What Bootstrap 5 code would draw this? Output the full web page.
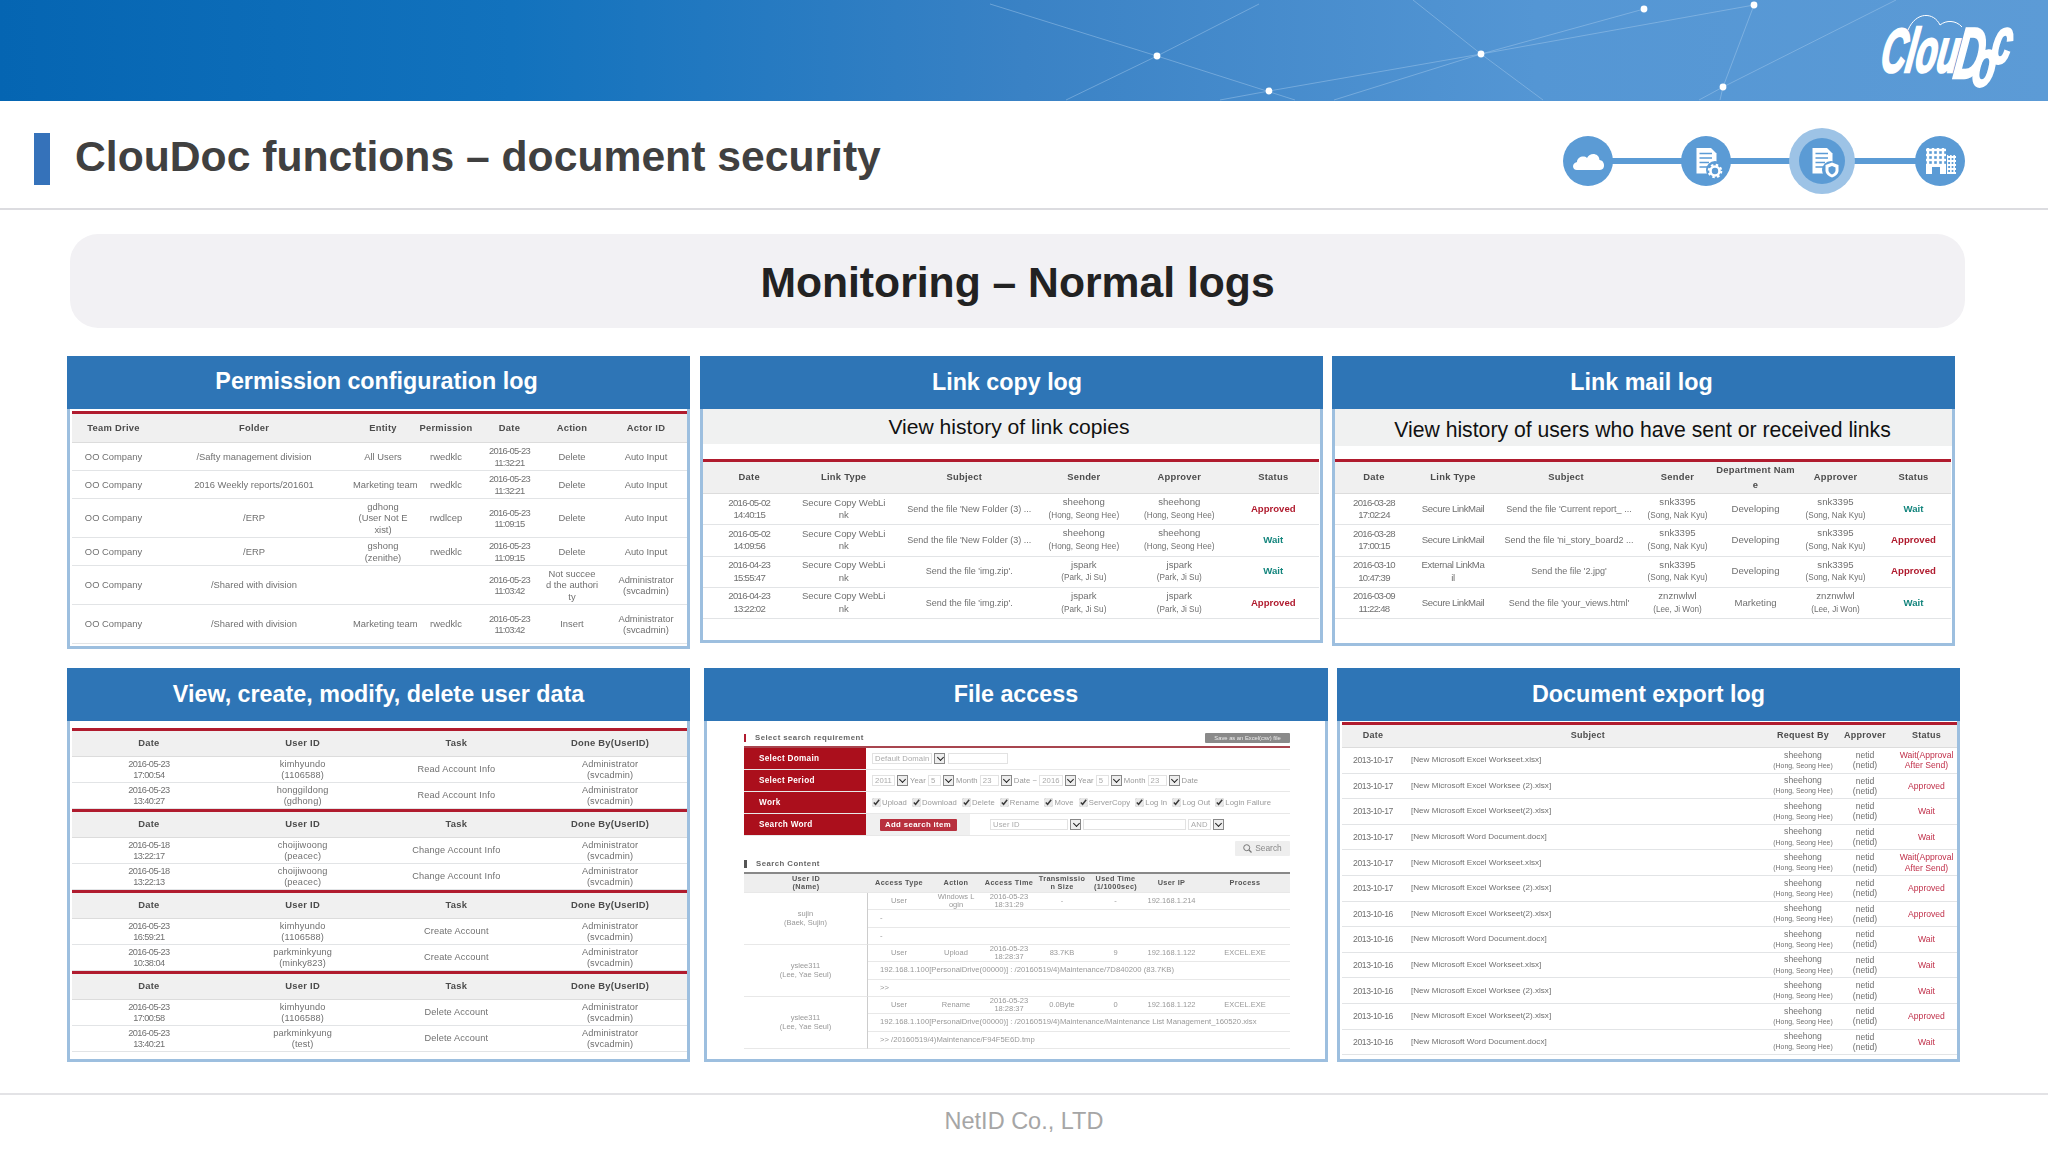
<!DOCTYPE html>
<html lang="en"><head><meta charset="utf-8"><title>ClouDoc functions</title>
<link href="https://cdn.jsdelivr.net/npm/bootstrap@5.3.0/dist/css/bootstrap.min.css" rel="stylesheet">
<style>
html,body{margin:0;background:#fff;font-family:"Liberation Sans",Arial,sans-serif;width:2048px;height:1152px;overflow:hidden}
.banner{height:101px;background:linear-gradient(90deg,#0565b2 0%,#1272bd 25%,#3a82c5 50%,#5496d4 75%,#5c9bd6 100%);padding-right:34px;padding-top:13px}
.net{position:absolute;left:0;top:0;width:2048px;height:101px}
.logo-c{position:relative;width:136px;height:76px}
.logo-c svg{overflow:visible}
.titlebar{height:109px;border-bottom:2px solid #dcdce0}
.hd-bar{width:16px;height:52px;background:#3572ba;margin-left:34px;margin-top:8px}
.hd-title{font-size:42.67px;font-weight:700;color:#404040;margin:0 0 0 25px;line-height:1;padding-top:4px}
.stepper{margin-right:75px;margin-top:12px}
.pill-t{height:94px;width:1895px;margin:24px 0 0 70px;background:#f2f1f4;border-radius:28px}
.pill-t h2{font-size:42.67px;font-weight:700;color:#222;margin:0;line-height:1;padding-top:2px}
.prow{padding-left:67px}
.prow-a{margin-top:28px;height:312px;gap:10px}
.prow-b{height:394px;gap:14px}
.prow-a .pnl:last-child{margin-left:-1px}
.prow-b .pnl:last-child{margin-left:-5px}
.pnl{width:623px;border:0;border-radius:0;background:#fff}
.pw2{width:624px}
.ph1{height:293px}.ph2{height:287px}.ph3{height:290px}.ph4{height:394px}
.pnl>.card-header{height:53px;background:#2e75b6;border:0;border-radius:0;color:#fff;font-weight:700;font-size:23.3px;text-align:center;padding:0;line-height:52px;flex:none}
.ph1>.card-header{line-height:50px;padding-right:4px}
.ph2>.card-header{padding-right:9px}
.ph3>.card-header{padding-right:4px}
.subt{background:#f0f1f1;color:#111;text-align:center;margin:0;height:35px;line-height:36px;font-size:21.1px;padding-right:5px}
.subt.s2{height:37px;line-height:42px;font-size:21.2px;padding-right:2px}
.pnl>.card-body{padding:0;border:solid #9dbfdf;border-width:0 3px 3px;min-height:0;flex:1 1 auto;overflow:hidden}
.table.logt{table-layout:fixed;border-collapse:separate;border-spacing:0;margin:0;border-top:3px solid #b01b2e;font-size:9.4px;color:#707070;--bs-table-bg:#fff;--bs-table-color:#707070;filter:blur(.3px)}
.table.logt>:not(caption)>*>*{padding:0;vertical-align:middle;text-align:center;border-bottom:1px solid #e2e4e6;color:#707070;white-space:nowrap;overflow:visible}
.table.logt>thead>tr>th{background:#f0f0f0;color:#4c4c4c;font-weight:700;letter-spacing:.25px;border-bottom:1px solid #dcdcdc}
.cap1{padding:2px 0 0 2px}
.cap0{padding:1px 0 0 2px}
.cap2{padding:15px 1px 0 0}
.s2+.cap2{padding-top:13px}
.t1 th{height:29px}.t1 td{height:28px;line-height:11.3px}.t1 tr.tall td{height:39px}
.table.t1>tbody>tr>td:nth-child(5){letter-spacing:-.7px}
.t1 col:nth-child(1){width:83px}.t1 col:nth-child(2){width:198px}.t1 col:nth-child(3){width:60px}.t1 col:nth-child(4){width:66px}.t1 col:nth-child(5){width:61px}.t1 col:nth-child(6){width:64px}.t1 col:nth-child(7){width:84px}
.t2 th{height:32px}.t2 td{height:31.3px;line-height:12.6px;font-size:9.6px}
.table.t2>tbody>tr>td:nth-child(1){letter-spacing:-.72px}
.table.t2>tbody>tr>td:nth-child(2){letter-spacing:-.1px}
.table.t2>tbody>tr>td:nth-child(3){font-size:9px;padding-left:10px}
.table.t3>tbody>tr>td:nth-child(2){letter-spacing:-.4px}
.table.t3>tbody>tr>td:nth-child(3){padding-left:6px}
.t2 small,.t3 small{font-size:8.2px}
.t2 col:nth-child(1){width:92px}.t2 col:nth-child(2){width:96px}.t2 col:nth-child(3){width:144px}.t2 col:nth-child(4){width:94px}.t2 col:nth-child(5){width:96px}.t2 col:nth-child(6){width:91px}
.t3 col:nth-child(1){width:78px}.t3 col:nth-child(2){width:80px}.t3 col:nth-child(3){width:146px}.t3 col:nth-child(4){width:77px}.t3 col:nth-child(5){width:79px}.t3 col:nth-child(6){width:81px}.t3 col:nth-child(7){width:75px}
.table.logt>*>*>.okst{color:#b01b2e;font-weight:700}
.table.logt>*>*>.wtst{color:#14857d;font-weight:700}
.t4wrap{padding:7px 0 0 2px}
.t4 th{height:26px}.t4 td{height:26px;line-height:10.5px;letter-spacing:.15px;font-size:9.2px}
.table.t4>tbody>tr>td:nth-child(1){letter-spacing:-.55px}
.t6 th{height:23px;font-size:9px}.t6 td{height:25.6px;line-height:10.2px;font-size:8.6px}
.table.t6>tbody>tr>td:nth-child(1){letter-spacing:-.4px}
.t6 small{font-size:6.9px}
.t6 col:nth-child(1){width:62px}.t6 col:nth-child(2){width:368px}.t6 col:nth-child(3){width:62px}.t6 col:nth-child(4){width:62px}.t6 col:nth-child(5){width:61px}
.table.logt>tbody>tr>.lft{text-align:left;padding-left:7px;font-size:8.1px}
.table.logt>*>*>.rdst{color:#c0304a}
.fa-wrap{padding:12px 35px 0 37px;filter:blur(.3px)}
.fa-h{height:10px;font-size:7.8px;font-weight:700;color:#666;letter-spacing:.45px;line-height:10px}
.fa-h i{display:block;width:2px;height:8px;background:#b01b2e;margin-right:9px}
.fa-h.dk i{background:#555;width:3px}
.fa-save{background:#8a8a8a;color:#eee;font-size:5.8px;width:85px;height:10px;line-height:10px;text-align:center;border-radius:1px;font-weight:400;letter-spacing:0}
.fa-form{margin-top:3px;border-top:2px solid #a8454f}
.fa-r{height:22px;border-bottom:1px solid #e8e8e8;font-size:7.7px;color:#999;letter-spacing:.1px;white-space:nowrap}
.fa-l{width:122px;height:100%;background:#ab0f1c;color:#fff;font-weight:700;font-size:8.2px;padding-left:15px;line-height:21px;flex:none;letter-spacing:.3px}
.fa-v{padding-left:6px;gap:2px;flex:1}
.sbox{display:inline-block;height:11px;line-height:10px;border:1px solid #e2e2e2;padding:0 2px;color:#aaa;flex:none}
.sbox.wa{width:19px}.sbox.wb{width:13px}.sbox.wc{width:60px;margin-left:1px}
.sbox.wu{width:78px;margin-left:14px}.sbox.wt{width:103px}
.sarr{display:inline-block;width:11px;height:11px;border:1px solid #888;background:#eee;position:relative;flex:none}
.sarr::after{content:"";position:absolute;left:2.5px;top:1px;width:5px;height:5px;border:solid #222;border-width:0 1.5px 1.5px 0;transform:rotate(45deg)}
.fa-v.fa-c{gap:5px}
.fa-c label{display:inline-flex;align-items:center;gap:1px}
.fa-c input{width:9px;height:9px;margin:0;accent-color:#e8e8e8}
.fa-add{width:104px;height:100%;background:#f0f0f0;flex:none;display:flex;align-items:center;justify-content:center}
.btn.fa-red{background:#b8303e;color:#fff;border:0;border-radius:1px;font-size:7.8px;font-weight:700;width:77px;height:12px;padding:0;line-height:12px;letter-spacing:.35px}
.fa-btm{height:16px;margin-top:5px}
.btn.fa-s{background:#eee;border:0;border-radius:1px;width:55px;height:15px;padding:0;font-size:8.4px;color:#888;line-height:15px;display:flex;align-items:center;justify-content:center;gap:3px}
.fa-sc{margin-top:2px}
.table.fat{table-layout:fixed;margin:3px 0 0;border-collapse:separate;border-spacing:0;border-top:2px solid #888;font-size:7.5px;color:#999;--bs-table-bg:#fff}
.table.fat>:not(caption)>*>*{padding:0;vertical-align:middle;text-align:center;border-bottom:1px solid #e8e8e8;color:#999;line-height:8.2px;height:17.3px;white-space:nowrap}
.table.fat>thead>tr>th{background:#eee;color:#555;font-weight:700;height:19px;letter-spacing:.35px;font-size:7.3px}
.table.fat>tbody>tr>td.gl{border-right:1px solid #ccc}
.table.fat>tbody>tr>td.lf{text-align:left;padding-left:12px;font-size:7.7px}
.fat col:nth-child(1){width:124px}.fat col:nth-child(2){width:62px}.fat col:nth-child(3){width:52px}.fat col:nth-child(4){width:54px}.fat col:nth-child(5){width:52px}.fat col:nth-child(6){width:55px}.fat col:nth-child(7){width:57px}.fat col:nth-child(8){width:90px}
.foot-t{margin-top:31px;border-top:2px solid #e3e3e6;height:58px;color:#a6a6a6;font-size:23.5px;text-align:center;line-height:53px}
</style></head><body>
<header class="banner position-relative d-flex justify-content-end">
<svg class="net" viewBox="0 0 2048 101" aria-hidden="true">
<g stroke="#a9cdee" stroke-width="1" stroke-opacity=".45" fill="none">
<path d="M990 4 1157 56 1295 100M1259 4 1157 56 1066 100"/>
<path d="M1220 100 1269 91 1481 54 1334 100M1481 54 1644 9M1481 54 1754 5M1413 0 1481 54 1543 100M1754 5 1723 87 1720 100M1896 0 1723 87 1699 100"/>
</g>
<g fill="#fff"><circle cx="1157" cy="56" r="3.4"/><circle cx="1269" cy="91" r="3.4"/><circle cx="1481" cy="54" r="3.4"/><circle cx="1644" cy="9" r="3.4"/><circle cx="1754" cy="5" r="3.4"/><circle cx="1723" cy="87" r="3.4"/></g>
</svg>
<div class="logo-c">
<svg width="136" height="76" viewBox="0 0 136 76">
<path d="M30 17C38 -2 56 -1 62 12C68 7 78 7 84 14" fill="none" stroke="#fff" stroke-width="1"/>
<text transform="translate(1 59) skewX(-9) scale(1 1.786)" font-family="'Liberation Sans',sans-serif" font-weight="700" font-style="italic" fill="#fff" stroke="#fff" stroke-width="1.4" font-size="34.7">Clou<tspan font-size="40.3" dy="3.4" dx="-2.8">D</tspan><tspan font-size="37" dy="4.500" dx="-10">o</tspan><tspan font-size="36" dy="-12.900" dx="-7">c</tspan></text>
</svg>
</div>
</header>
<div class="titlebar d-flex align-items-center">
<div class="hd-bar"></div>
<h1 class="hd-title">ClouDoc functions – document security</h1>
<svg class="stepper ms-auto" width="420" height="72" viewBox="0 0 420 72" aria-hidden="true">
<defs>
<g id="docI"><path d="M-9.5 -13H5L10.5 -7.5V12.5H-9.5Z" fill="#fff"/><path d="M-6.5 -7.5H6M-6.5 -3H6M-6.5 1.5H3M-6.5 6H1" stroke="#5b9bd5" stroke-width="1.4"/><circle cx="9" cy="9" r="9" fill="#5b9bd5"/></g>
<pattern id="winA" width="5" height="5" patternUnits="userSpaceOnUse"><rect x="1.2" y="1.2" width="2.6" height="2.6" fill="#5b9bd5"/></pattern>
<pattern id="winB" width="3.4" height="4" patternUnits="userSpaceOnUse"><rect x=".8" y="1" width="1.8" height="2" fill="#5b9bd5"/></pattern>
</defs>
<rect x="35" y="33" width="352" height="6" fill="#5b9bd5"/>
<circle cx="35" cy="36" r="25" fill="#5b9bd5"/><circle cx="153" cy="36" r="25" fill="#5b9bd5"/><circle cx="269" cy="36" r="33" fill="#9dc3e6"/><circle cx="269" cy="36" r="23" fill="#5b9bd5"/><circle cx="387" cy="36" r="25" fill="#5b9bd5"/>
<path d="M24 45C19 45 18.500 38 24 37C24 32 31 30 34 33C37 27 46 28 46.500 35C52 35 53 45 47 45Z" fill="#fff"/>
<use href="#docI" x="153" y="36"/>
<g transform="translate(162 46)"><circle r="4.500" fill="none" stroke="#fff" stroke-width="2.600"/><circle r="6.300" fill="none" stroke="#fff" stroke-width="2" stroke-dasharray="2.500 2.450"/></g>
<use href="#docI" x="269" y="36"/>
<path d="M279 37.500 285.500 40V45.500C285.500 49 282 51.500 279 52.500C276 51.500 272.500 49 272.500 45.500V40Z" fill="#fff"/><path d="M279 41 282.500 42.500V45.500C282.500 47 281 48.500 279 49.500C277 48.500 275.500 47 275.500 45.500V42.500Z" fill="#5b9bd5"/>
<rect x="373" y="23" width="20" height="26" fill="#fff"/><rect x="373" y="23" width="20" height="18" fill="url(#winA)"/><rect x="379" y="42" width="8" height="7" fill="#5b9bd5"/>
<rect x="394" y="30" width="9" height="19" fill="#fff"/><rect x="394" y="30" width="9" height="19" fill="url(#winB)"/>
</svg>
</div>
<div class="pill-t d-flex align-items-center justify-content-center"><h2>Monitoring – Normal logs</h2></div>
<div class="prow prow-a d-flex align-items-start">
<section class="card pnl ph1">
<div class="card-header">Permission configuration log</div>
<div class="card-body"><div class="cap1">
<table class="table logt t1"><colgroup><col><col><col><col><col><col><col></colgroup>
<thead><tr><th>Team Drive</th><th>Folder</th><th>Entity</th><th>Permission</th><th>Date</th><th>Action</th><th>Actor ID</th></tr></thead>
<tbody>
<tr><td>OO Company</td><td>/Safty management division</td><td>All Users</td><td>rwedklc</td><td>2016-05-23<br>11:32:21</td><td>Delete</td><td>Auto Input</td></tr>
<tr><td>OO Company</td><td>2016 Weekly reports/201601</td><td>Marketing team</td><td>rwedklc</td><td>2016-05-23<br>11:32:21</td><td>Delete</td><td>Auto Input</td></tr>
<tr class="tall"><td>OO Company</td><td>/ERP</td><td>gdhong<br>(User Not E<br>xist)</td><td>rwdlcep</td><td>2016-05-23<br>11:09:15</td><td>Delete</td><td>Auto Input</td></tr>
<tr><td>OO Company</td><td>/ERP</td><td>gshong<br>(zenithe)</td><td>rwedklc</td><td>2016-05-23<br>11:09:15</td><td>Delete</td><td>Auto Input</td></tr>
<tr class="tall"><td>OO Company</td><td>/Shared with division</td><td></td><td></td><td>2016-05-23<br>11:03:42</td><td>Not succee<br>d the authori<br>ty</td><td>Administrator<br>(svcadmin)</td></tr>
<tr class="tall"><td>OO Company</td><td>/Shared with division</td><td>Marketing team</td><td>rwedklc</td><td>2016-05-23<br>11:03:42</td><td>Insert</td><td>Administrator<br>(svcadmin)</td></tr>
</tbody></table></div></div>
</section>
<section class="card pnl ph2">
<div class="card-header">Link copy log</div>
<div class="card-body"><p class="subt">View history of link copies</p><div class="cap2">
<table class="table logt t2"><colgroup><col><col><col><col><col><col></colgroup>
<thead><tr><th>Date</th><th>Link Type</th><th>Subject</th><th>Sender</th><th>Approver</th><th>Status</th></tr></thead>
<tbody>
<tr><td>2016-05-02<br>14:40:15</td><td>Secure Copy WebLi<br>nk</td><td>Send the file 'New Folder (3) ...</td><td>sheehong<br><small>(Hong, Seong Hee)</small></td><td>sheehong<br><small>(Hong, Seong Hee)</small></td><td class="okst">Approved</td></tr>
<tr><td>2016-05-02<br>14:09:56</td><td>Secure Copy WebLi<br>nk</td><td>Send the file 'New Folder (3) ...</td><td>sheehong<br><small>(Hong, Seong Hee)</small></td><td>sheehong<br><small>(Hong, Seong Hee)</small></td><td class="wtst">Wait</td></tr>
<tr><td>2016-04-23<br>15:55:47</td><td>Secure Copy WebLi<br>nk</td><td>Send the file 'img.zip'.</td><td>jspark<br><small>(Park, Ji Su)</small></td><td>jspark<br><small>(Park, Ji Su)</small></td><td class="wtst">Wait</td></tr>
<tr><td>2016-04-23<br>13:22:02</td><td>Secure Copy WebLi<br>nk</td><td>Send the file 'img.zip'.</td><td>jspark<br><small>(Park, Ji Su)</small></td><td>jspark<br><small>(Park, Ji Su)</small></td><td class="okst">Approved</td></tr>
</tbody></table></div></div>
</section>
<section class="card pnl ph3">
<div class="card-header">Link mail log</div>
<div class="card-body"><p class="subt s2">View history of users who have sent or received links</p><div class="cap2">
<table class="table logt t2 t3"><colgroup><col><col><col><col><col><col><col></colgroup>
<thead><tr><th>Date</th><th>Link Type</th><th>Subject</th><th>Sender</th><th>Department Nam<br>e</th><th>Approver</th><th>Status</th></tr></thead>
<tbody>
<tr><td>2016-03-28<br>17:02:24</td><td>Secure LinkMail</td><td>Send the file 'Current report_ ...</td><td>snk3395<br><small>(Song, Nak Kyu)</small></td><td>Developing</td><td>snk3395<br><small>(Song, Nak Kyu)</small></td><td class="wtst">Wait</td></tr>
<tr><td>2016-03-28<br>17:00:15</td><td>Secure LinkMail</td><td>Send the file 'ni_story_board2 ...</td><td>snk3395<br><small>(Song, Nak Kyu)</small></td><td>Developing</td><td>snk3395<br><small>(Song, Nak Kyu)</small></td><td class="okst">Approved</td></tr>
<tr><td>2016-03-10<br>10:47:39</td><td>External LinkMa<br>il</td><td>Send the file '2.jpg'</td><td>snk3395<br><small>(Song, Nak Kyu)</small></td><td>Developing</td><td>snk3395<br><small>(Song, Nak Kyu)</small></td><td class="okst">Approved</td></tr>
<tr><td>2016-03-09<br>11:22:48</td><td>Secure LinkMail</td><td>Send the file 'your_views.html'</td><td>znznwlwl<br><small>(Lee, Ji Won)</small></td><td>Marketing</td><td>znznwlwl<br><small>(Lee, Ji Won)</small></td><td class="wtst">Wait</td></tr>
</tbody></table></div></div>
</section>
</div>
<div class="prow prow-b d-flex align-items-start">
<section class="card pnl ph4">
<div class="card-header">View, create, modify, delete user data</div>
<div class="card-body"><div class="t4wrap">
<table class="table logt t4"><thead><tr><th>Date</th><th>User ID</th><th>Task</th><th>Done By(UserID)</th></tr></thead>
<tbody><tr><td>2016-05-23<br>17:00:54</td><td>kimhyundo<br>(1106588)</td><td>Read Account Info</td><td>Administrator<br>(svcadmin)</td></tr>
<tr><td>2016-05-23<br>13:40:27</td><td>honggildong<br>(gdhong)</td><td>Read Account Info</td><td>Administrator<br>(svcadmin)</td></tr></tbody></table>
<table class="table logt t4"><thead><tr><th>Date</th><th>User ID</th><th>Task</th><th>Done By(UserID)</th></tr></thead>
<tbody><tr><td>2016-05-18<br>13:22:17</td><td>choijiwoong<br>(peacec)</td><td>Change Account Info</td><td>Administrator<br>(svcadmin)</td></tr>
<tr><td>2016-05-18<br>13:22:13</td><td>choijiwoong<br>(peacec)</td><td>Change Account Info</td><td>Administrator<br>(svcadmin)</td></tr></tbody></table>
<table class="table logt t4"><thead><tr><th>Date</th><th>User ID</th><th>Task</th><th>Done By(UserID)</th></tr></thead>
<tbody><tr><td>2016-05-23<br>16:59:21</td><td>kimhyundo<br>(1106588)</td><td>Create Account</td><td>Administrator<br>(svcadmin)</td></tr>
<tr><td>2016-05-23<br>10:38:04</td><td>parkminkyung<br>(minky823)</td><td>Create Account</td><td>Administrator<br>(svcadmin)</td></tr></tbody></table>
<table class="table logt t4"><thead><tr><th>Date</th><th>User ID</th><th>Task</th><th>Done By(UserID)</th></tr></thead>
<tbody><tr><td>2016-05-23<br>17:00:58</td><td>kimhyundo<br>(1106588)</td><td>Delete Account</td><td>Administrator<br>(svcadmin)</td></tr>
<tr><td>2016-05-23<br>13:40:21</td><td>parkminkyung<br>(test)</td><td>Delete Account</td><td>Administrator<br>(svcadmin)</td></tr></tbody></table>
</div></div>
</section>
<section class="card pnl pw2 ph4">
<div class="card-header">File access</div>
<div class="card-body"><div class="fa-wrap">
<div class="fa-h d-flex align-items-center"><i></i><span>Select search requirement</span><span class="fa-save ms-auto">Save as an Excel(csv) file</span></div>
<div class="fa-form">
<div class="fa-r d-flex align-items-center"><div class="fa-l">Select Domain</div><div class="fa-v d-flex align-items-center"><span class="sbox">Default Domain</span><span class="sarr"></span><span class="sbox wc"></span></div></div>
<div class="fa-r d-flex align-items-center"><div class="fa-l">Select Period</div><div class="fa-v d-flex align-items-center"><span class="sbox">2011</span><span class="sarr"></span><span>Year</span><span class="sbox wb">5</span><span class="sarr"></span><span>Month</span><span class="sbox wa">23</span><span class="sarr"></span><span>Date ~</span><span class="sbox">2016</span><span class="sarr"></span><span>Year</span><span class="sbox wb">5</span><span class="sarr"></span><span>Month</span><span class="sbox wa">23</span><span class="sarr"></span><span>Date</span></div></div>
<div class="fa-r d-flex align-items-center"><div class="fa-l">Work</div><div class="fa-v fa-c d-flex align-items-center"><label><input type="checkbox" checked>Upload</label><label><input type="checkbox" checked>Download</label><label><input type="checkbox" checked>Delete</label><label><input type="checkbox" checked>Rename</label><label><input type="checkbox" checked>Move</label><label><input type="checkbox" checked>ServerCopy</label><label><input type="checkbox" checked>Log In</label><label><input type="checkbox" checked>Log Out</label><label><input type="checkbox" checked>Login Failure</label></div></div>
<div class="fa-r d-flex align-items-center"><div class="fa-l">Search Word</div><div class="fa-add"><button type="button" class="btn fa-red">Add search item</button></div><div class="fa-v d-flex align-items-center"><span class="sbox wu">User ID</span><span class="sarr"></span><span class="sbox wt"></span><span class="sbox">AND</span><span class="sarr"></span></div></div>
</div>
<div class="fa-btm d-flex justify-content-end"><button type="button" class="btn fa-s"><svg width="9" height="9" viewBox="0 0 9 9"><circle cx="3.700" cy="3.700" r="3" fill="none" stroke="#777"/><path d="M6 6 8.500 8.500" stroke="#777" stroke-width="1.300"/></svg>Search</button></div>
<div class="fa-h dk fa-sc d-flex align-items-center"><i></i><span>Search Content</span></div>
<table class="table fat"><colgroup><col><col><col><col><col><col><col><col></colgroup>
<thead><tr><th>User ID<br>(Name)</th><th>Access Type</th><th>Action</th><th>Access Time</th><th>Transmissio<br>n Size</th><th>Used Time<br>(1/1000sec)</th><th>User IP</th><th>Process</th></tr></thead>
<tbody>
<tr><td rowspan="3" class="gl">sujin<br>(Baek, Sujin)</td><td>User</td><td>Windows L<br>ogin</td><td>2016-05-23<br>18:31:29</td><td>-</td><td>-</td><td>192.168.1.214</td><td></td></tr>
<tr><td colspan="7" class="lf">-</td></tr><tr><td colspan="7" class="lf">-</td></tr>
<tr><td rowspan="3" class="gl">yslee311<br>(Lee, Yae Seul)</td><td>User</td><td>Upload</td><td>2016-05-23<br>18:28:37</td><td>83.7KB</td><td>9</td><td>192.168.1.122</td><td>EXCEL.EXE</td></tr>
<tr><td colspan="7" class="lf">192.168.1.100[PersonalDrive(00000)] : /20160519/4)Maintenance/7D840200 (83.7KB)</td></tr><tr><td colspan="7" class="lf">&gt;&gt;</td></tr>
<tr><td rowspan="3" class="gl">yslee311<br>(Lee, Yae Seul)</td><td>User</td><td>Rename</td><td>2016-05-23<br>18:28:37</td><td>0.0Byte</td><td>0</td><td>192.168.1.122</td><td>EXCEL.EXE</td></tr>
<tr><td colspan="7" class="lf">192.168.1.100[PersonalDrive(00000)] : /20160519/4)Maintenance/Maintenance List Management_160520.xlsx</td></tr><tr><td colspan="7" class="lf">&gt;&gt; /20160519/4)Maintenance/F94F5E6D.tmp</td></tr>
</tbody></table>
</div></div>
</section>
<section class="card pnl ph4">
<div class="card-header">Document export log</div>
<div class="card-body"><div class="cap0">
<table class="table logt t6"><colgroup><col><col><col><col><col></colgroup>
<thead><tr><th>Date</th><th>Subject</th><th>Request By</th><th>Approver</th><th>Status</th></tr></thead>
<tbody>
<tr><td>2013-10-17</td><td class="lft">[New Microsoft Excel Workseet.xlsx]</td><td>sheehong<br><small>(Hong, Seong Hee)</small></td><td>netid<br>(netid)</td><td class="rdst">Wait(Approval<br>After Send)</td></tr>
<tr><td>2013-10-17</td><td class="lft">[New Microsoft Excel Worksee (2).xlsx]</td><td>sheehong<br><small>(Hong, Seong Hee)</small></td><td>netid<br>(netid)</td><td class="rdst">Approved</td></tr>
<tr><td>2013-10-17</td><td class="lft">[New Microsoft Excel Workseet(2).xlsx]</td><td>sheehong<br><small>(Hong, Seong Hee)</small></td><td>netid<br>(netid)</td><td class="rdst">Wait</td></tr>
<tr><td>2013-10-17</td><td class="lft">[New Microsoft Word Document.docx]</td><td>sheehong<br><small>(Hong, Seong Hee)</small></td><td>netid<br>(netid)</td><td class="rdst">Wait</td></tr>
<tr><td>2013-10-17</td><td class="lft">[New Microsoft Excel Workseet.xlsx]</td><td>sheehong<br><small>(Hong, Seong Hee)</small></td><td>netid<br>(netid)</td><td class="rdst">Wait(Approval<br>After Send)</td></tr>
<tr><td>2013-10-17</td><td class="lft">[New Microsoft Excel Worksee (2).xlsx]</td><td>sheehong<br><small>(Hong, Seong Hee)</small></td><td>netid<br>(netid)</td><td class="rdst">Approved</td></tr>
<tr><td>2013-10-16</td><td class="lft">[New Microsoft Excel Workseet(2).xlsx]</td><td>sheehong<br><small>(Hong, Seong Hee)</small></td><td>netid<br>(netid)</td><td class="rdst">Approved</td></tr>
<tr><td>2013-10-16</td><td class="lft">[New Microsoft Word Document.docx]</td><td>sheehong<br><small>(Hong, Seong Hee)</small></td><td>netid<br>(netid)</td><td class="rdst">Wait</td></tr>
<tr><td>2013-10-16</td><td class="lft">[New Microsoft Excel Workseet.xlsx]</td><td>sheehong<br><small>(Hong, Seong Hee)</small></td><td>netid<br>(netid)</td><td class="rdst">Wait</td></tr>
<tr><td>2013-10-16</td><td class="lft">[New Microsoft Excel Worksee (2).xlsx]</td><td>sheehong<br><small>(Hong, Seong Hee)</small></td><td>netid<br>(netid)</td><td class="rdst">Wait</td></tr>
<tr><td>2013-10-16</td><td class="lft">[New Microsoft Excel Workseet(2).xlsx]</td><td>sheehong<br><small>(Hong, Seong Hee)</small></td><td>netid<br>(netid)</td><td class="rdst">Approved</td></tr>
<tr><td>2013-10-16</td><td class="lft">[New Microsoft Word Document.docx]</td><td>sheehong<br><small>(Hong, Seong Hee)</small></td><td>netid<br>(netid)</td><td class="rdst">Wait</td></tr>
</tbody></table></div></div>
</section>
</div>
<footer class="foot-t">NetID Co., LTD</footer>
<script src="https://cdn.jsdelivr.net/npm/bootstrap@5.3.0/dist/js/bootstrap.bundle.min.js"></script>
</body></html>
